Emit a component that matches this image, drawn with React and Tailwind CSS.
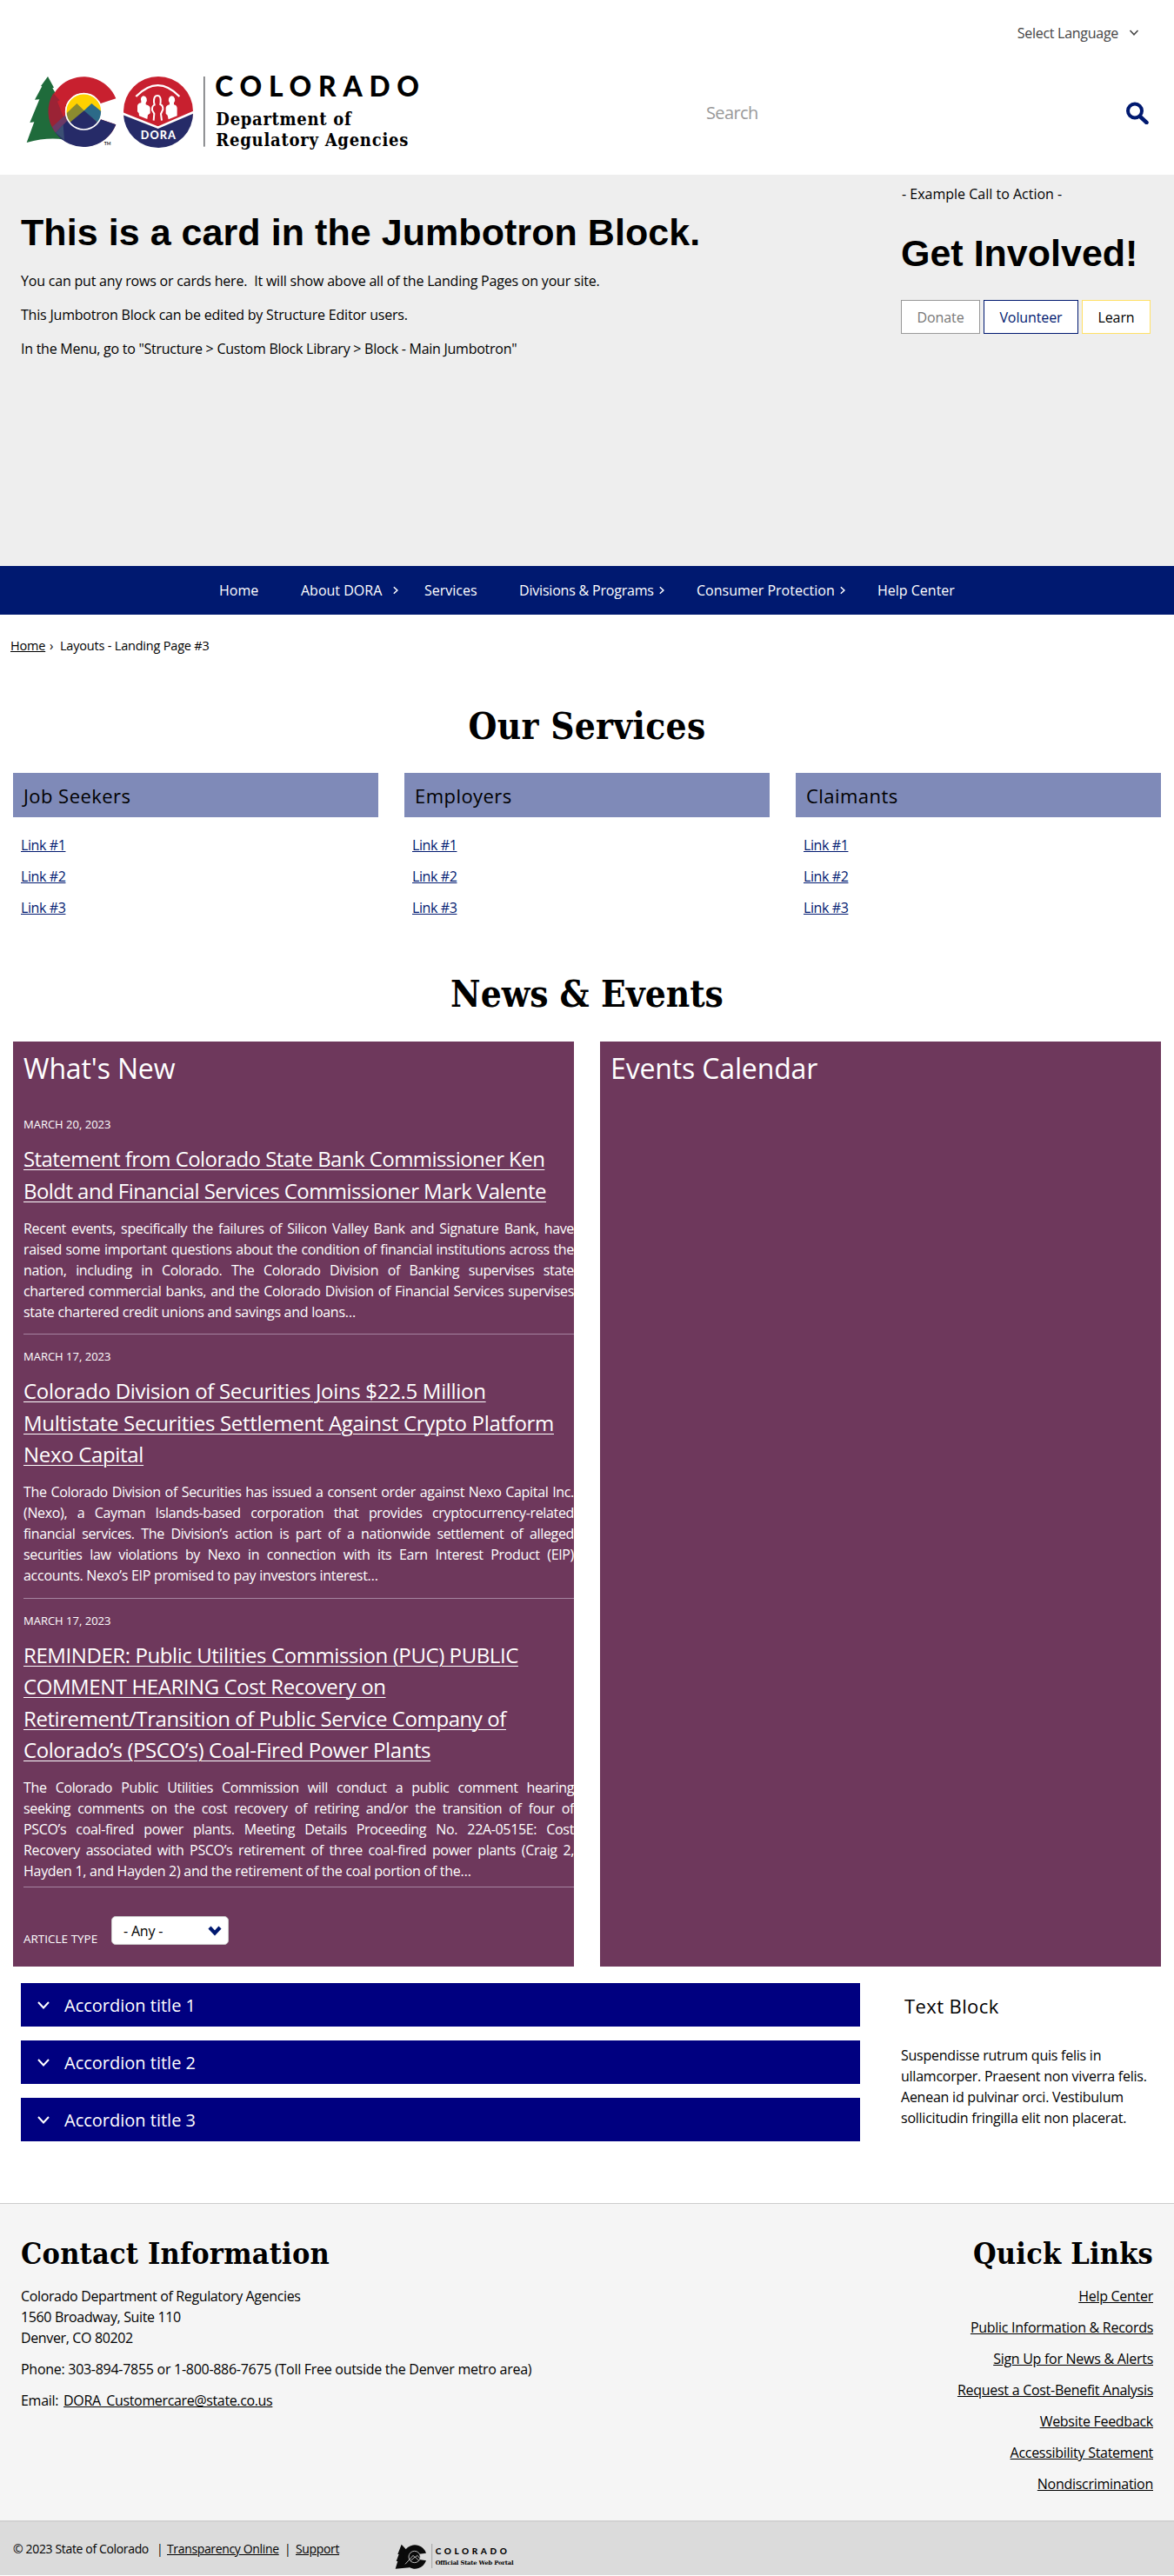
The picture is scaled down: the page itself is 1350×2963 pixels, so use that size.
import React from "react";

const SLAB = "font-['DejaVu_Serif_Condensed','DejaVu_Serif',serif] font-bold";

function Chevron({ className, dir = "down", stroke = 2 }) {
  const d = dir === "down" ? "M2 4 L8 10.5 L14 4" : "M4.5 2 L11 8 L4.5 14";
  return (
    <svg viewBox="0 0 16 16" className={className} fill="none" stroke="currentColor" strokeWidth={stroke}>
      <path d={d} />
    </svg>
  );
}

function StateEmblem() {
  return (
    <g>
      <path
        d="M165 84 L186 122 L181 124 L206 166 L198 170 L226 240 L222 302 Q165 292 92 312 L118 241 L103 243 L136 163 L120 164 L145 118 L141 117 Z"
        fill="#1f6b3b"
      />
      <path d="M400 160 A120 120 0 1 0 400 250 L345 231 A63 63 0 1 1 345 178 Z" fill="#c8202f" />
      <path d="M190 276 L240 226 A63 63 0 0 0 345 231 L400 250 A120 120 0 0 1 190 276 Z" fill="#262b68" />
      <path d="M184 142 L206 166 L198 170 L222 232 L190 276 A120 120 0 0 1 184 142 Z" fill="#9b2335" />
      <path d="M226 216 L232 236 L192 278 L180 258 Z" fill="#6c3a66" />
      <path d="M192 278 L218 250 L222 304 Z" fill="#3b4f74" />
      <circle cx="289" cy="205" r="62" fill="#ffd100" />
      <path d="M228 212 L265 177 L292 203 L240 243 Q228 228 228 212 Z" fill="#8b8b2f" />
      <path d="M350 205 L316 177 L288 203 L338 243 Q350 226 350 205 Z" fill="#2c6a88" />
      <path d="M240 243 L290 202 L338 243 A62 62 0 0 1 240 243 Z" fill="#262b68" />
      <circle cx="289" cy="205" r="62" fill="none" stroke="#fff" strokeWidth="5" />
    </g>
  );
}

function DoraLogo() {
  return (
    <svg viewBox="0 0 1500 420" width="500" height="140" className="block">
      <StateEmblem />
      <text x="359" y="321" fontFamily="Lato, sans-serif" fontWeight="700" fontSize="14" fill="#222" textLength="23" lengthAdjust="spacingAndGlyphs">TM</text>
      <circle cx="546" cy="204" r="120" fill="#c8202f" />
      <path d="M426 212 L545 262 L666 208 A120 120 0 0 1 426 212 Z" fill="#262b68" />
      <path d="M424 212 L545 260 L668 207" fill="none" stroke="#fff" strokeWidth="8" />
      <path d="M469 153 Q545 76 619 153" fill="none" stroke="#fff" strokeWidth="7" />
      <path d="M494 151 a12 14 0 0 1 9 24 v6 q14 3 15 12 v18 l-8 6 l-2 14 l-28 -11 l-1 -9 l-5 -6 v-20 q2 -9 13 -10 v-6 a12 14 0 0 1 7 -18 Z" fill="#fff" />
      <path d="M592 151 a12 14 0 0 1 8 24 v6 q10 2 11 12 v27 l-30 12 l-3 -14 l-6 -6 v-20 q2 -9 13 -11 v-6 a12 14 0 0 1 7 -24 Z" fill="#fff" />
      <path
        d="M530 236 L532 212 L525 200 Q524 185 533 182 L531 172 Q530 150 543 150 Q556 150 554 172 L553 180 Q563 184 562 198 L555 213 L558 236"
        fill="none"
        stroke="#fff"
        strokeWidth="6"
      />
      <text x="485" y="300" fontFamily="Lato, sans-serif" fontWeight="900" fontSize="38" fill="#fff" textLength="121">DORA</text>
      <rect x="702" y="84" width="5" height="242" fill="#77787b" />
      <text x="742" y="152" fontFamily="Lato, sans-serif" fontWeight="900" fontSize="95" fill="#000" textLength="704">COLORADO</text>
      <text x="745" y="253" fontFamily="DejaVu Serif Condensed, DejaVu Serif, serif" fontWeight="700" fontSize="60" fill="#000" textLength="466">Department of</text>
      <text x="745" y="325" fontFamily="DejaVu Serif Condensed, DejaVu Serif, serif" fontWeight="700" fontSize="60" fill="#000" textLength="663">Regulatory Agencies</text>
    </svg>
  );
}

function PortalLogo() {
  return (
    <svg viewBox="0 0 420 90" width="140" height="30" className="block">
      <path d="M23 2 L40 20 L52 60 L50 82 L2 86 L10 60 L5 60 L14 36 L10 36 Z" fill="#0a0a0a" />
      <path d="M108 32 A41 41 0 1 0 108 58 L84 54 A17 17 0 1 1 84 35 Z" fill="#0a0a0a" />
      <circle cx="68" cy="45" r="20" fill="#0a0a0a" stroke="#dbdbdb" strokeWidth="2.5" />
      <path d="M36 70 L58 46 L63 40 L70 47 L77 40 L87 50 M55 58 L70 45 L83 58" fill="none" stroke="#dbdbdb" strokeWidth="2.5" />
      <path d="M128 0 V84" stroke="#8a8a8a" strokeWidth="2" />
      <text x="140" y="35" fontFamily="Lato, sans-serif" fontWeight="900" fontSize="30" textLength="246">COLORADO</text>
      <text x="140" y="71" fontFamily="DejaVu Serif Condensed, DejaVu Serif, serif" fontWeight="700" fontSize="20" textLength="269" lengthAdjust="spacingAndGlyphs">Official State Web Portal</text>
    </svg>
  );
}

function Header() {
  return (
    <header className="h-[201px] bg-white pt-[26px]">
      <div className="flex h-6 items-center justify-end pr-[40px] text-[#444]">
        <span className="tracking-[-0.28px]">Select Language</span>
        <Chevron className="ml-[12px] size-3" />
      </div>
      <div className="mt-[10px] flex h-[140px] items-center">
        <DoraLogo />
        <span className="ml-[312px] flex-1 text-[20px] tracking-[-0.6px] text-[#999]">Search</span>
        <svg viewBox="0 0 26 26" className="mr-[29px] size-[26px]" fill="none" stroke="#001970">
          <circle cx="10" cy="10.5" r="8" strokeWidth="4" />
          <path d="M16 17 L23.5 24" strokeWidth="4.5" strokeLinecap="round" />
        </svg>
      </div>
    </header>
  );
}

function Jumbotron() {
  return (
    <section className="flex h-[450px] justify-between bg-[#eee] pl-6">
      <div className="pt-[42px] tracking-[-0.2px]">
        <h1 className="font-['Liberation_Sans',sans-serif] text-[43px] leading-[48px] font-bold tracking-[0.06px]">This is a card in the Jumbotron Block.</h1>
        <div className="mt-5 flex flex-col gap-[15px]">
          <p>You can put any rows or cards here.&nbsp; It will show above all of the Landing Pages on your site.</p>
          <p>This Jumbotron Block can be edited by Structure Editor users.</p>
          <p className="tracking-[-0.26px]">In the Menu, go to "Structure &gt; Custom Block Library &gt; Block - Main Jumbotron"</p>
        </div>
      </div>
      <div className="w-[314px] pt-[10px]">
        <p className="pl-px">- Example Call to Action -</p>
        <h2 className="mt-8 font-['Liberation_Sans',sans-serif] text-[43px] leading-[48px] font-bold">Get Involved!</h2>
        <div className="mt-[30px] flex h-[39px] gap-1 tracking-[-0.1px] [&>a]:flex [&>a]:items-center [&>a]:justify-center [&>a]:border [&>a]:bg-white">
          <a className="w-[91px] border-[#999] text-[#777]">Donate</a>
          <a className="w-[109px] border-[#001970] text-[#001970]">Volunteer</a>
          <a className="w-[79px] border-[#ffe066] text-black">Learn</a>
        </div>
      </div>
    </section>
  );
}

function Nav() {
  return (
    <nav className="flex h-14 items-center bg-[#001970] pl-[252px] text-white">
      <a className="w-[94px]">Home</a>
      <a className="flex w-[142px] items-center">About DORA<Chevron dir="right" stroke={2.4} className="ml-[11px] size-[10px]" /></a>
      <a className="w-[109px]">Services</a>
      <a className="flex w-[204px] items-center tracking-[-0.2px]">Divisions &amp; Programs<Chevron dir="right" stroke={2.4} className="ml-[4px] size-[10px]" /></a>
      <a className="flex w-[208px] items-center">Consumer Protection<Chevron dir="right" stroke={2.4} className="ml-[4px] size-[10px]" /></a>
      <a>Help Center</a>
    </nav>
  );
}

function Services() {
  return (
    <div className="mt-[29px] grid grid-cols-3 gap-[30px] px-[15px]">
      {["Job Seekers", "Employers", "Claimants"].map((title) => (
        <div key={title}>
          <h3 className="flex h-[51px] items-center bg-[#7f8ab8] pl-3 text-[22px] tracking-[0.45px]">{title}</h3>
          <ul className="mt-[14px] mb-px pl-[9px] leading-9 tracking-[-0.4px] text-[#001970] underline">
            <li>Link #1</li>
            <li>Link #2</li>
            <li>Link #3</li>
          </ul>
        </div>
      ))}
    </div>
  );
}

const NEWS = [
  {
    date: "MARCH 20, 2023",
    tracking: "tracking-[-0.56px]",
    title: ["Statement from Colorado State Bank Commissioner Ken", "Boldt and Financial Services Commissioner Mark Valente"],
    body: [
      "Recent events, specifically the failures of Silicon Valley Bank and Signature Bank, have",
      "raised some important questions about the condition of financial institutions across the",
      "nation, including in Colorado. The Colorado Division of Banking supervises state",
      "chartered commercial banks, and the Colorado Division of Financial Services supervises",
      "state chartered credit unions and savings and loans…",
    ],
  },
  {
    date: "MARCH 17, 2023",
    tracking: "tracking-[-0.32px]",
    title: ["Colorado Division of Securities Joins $22.5 Million", "Multistate Securities Settlement Against Crypto Platform", "Nexo Capital"],
    body: [
      "The Colorado Division of Securities has issued a consent order against Nexo Capital Inc.",
      "(Nexo), a Cayman Islands-based corporation that provides cryptocurrency-related",
      "financial services. The Division’s action is part of a nationwide settlement of alleged",
      "securities law violations by Nexo in connection with its Earn Interest Product (EIP)",
      "accounts. Nexo’s EIP promised to pay investors interest…",
    ],
  },
  {
    date: "MARCH 17, 2023",
    tracking: "tracking-[-0.42px]",
    title: [
      "REMINDER: Public Utilities Commission (PUC) PUBLIC",
      "COMMENT HEARING Cost Recovery on",
      "Retirement/Transition of Public Service Company of",
      "Colorado’s (PSCO’s) Coal-Fired Power Plants",
    ],
    body: [
      "The Colorado Public Utilities Commission will conduct a public comment hearing",
      "seeking comments on the cost recovery of retiring and/or the transition of four of",
      "PSCO’s coal-fired power plants. Meeting Details Proceeding No. 22A-0515E: Cost",
      "Recovery associated with PSCO’s retirement of three coal-fired power plants (Craig 2,",
      "Hayden 1, and Hayden 2) and the retirement of the coal portion of the…",
    ],
  },
];

function NewsItem({ item, last }) {
  return (
    <article className={last ? "border-b border-[#a583a0] pb-[6px]" : "mb-[13px] border-b border-[#a583a0] pb-[13.5px]"}>
      <p className="text-[13px]">{item.date}</p>
      <h4 className={`mt-[10px] text-[24px] leading-[36.5px] whitespace-nowrap underline decoration-1 underline-offset-[3px] ${item.tracking}`}>
        {item.title.map((t) => (
          <span key={t} className="block">{t}</span>
        ))}
      </h4>
      <p className="mt-[12.5px] tracking-[-0.34px]">
        {item.body.map((t, i) => (
          <span key={t} className={i < item.body.length - 1 ? "block [text-align-last:justify]" : "block tracking-[-0.28px]"}>{t}</span>
        ))}
      </p>
    </article>
  );
}

function News() {
  return (
    <div className="mt-[30px] grid grid-cols-2 gap-[30px] px-[15px] text-white">
      <section className="h-[1064px] bg-[#6e385c] pt-[7px] pl-3">
        <h3 className="text-[32px] leading-[48px] tracking-[-0.15px]">What's New</h3>
        <div className="mt-[28px]">
          {NEWS.map((item, i) => (
            <NewsItem key={i} item={item} last={i === NEWS.length - 1} />
          ))}
        </div>
        <div className="mt-[33px] flex items-end">
          <span className="w-[101px] translate-y-[4px] text-[13.5px] leading-[22px]">ARTICLE TYPE</span>
          <span className="flex h-[33px] w-[135px] items-center justify-between rounded-[5px] border border-[#ccc] bg-white pr-[7px] pl-[13px] tracking-[-0.2px] text-black">
            - Any -
            <Chevron stroke={4.2} className="size-[16px] text-[#001970]" />
          </span>
        </div>
      </section>
      <section className="bg-[#6e385c] pt-[7px] pl-3">
        <h3 className="text-[32px] leading-[48px] tracking-[-0.15px]">Events Calendar</h3>
      </section>
    </div>
  );
}

function Accordions() {
  return (
    <div className="mt-[19px] flex pl-6">
      <div className="flex w-[965px] flex-col gap-4">
        {[1, 2, 3].map((n) => (
          <div key={n} className="flex h-[50px] items-center bg-[#000080] pt-px pl-[18px] text-[20px] text-white">
            <Chevron className="mr-4 size-4" />
            Accordion title {n}
          </div>
        ))}
      </div>
      <div className="pl-[47px]">
        <h3 className="pt-[12px] pl-1 text-[22px] leading-[28px] tracking-[0.4px]">Text Block</h3>
        <p className="mt-[31px] tracking-[-0.24px] whitespace-nowrap">
          Suspendisse rutrum quis felis in<br />
          ullamcorper. Praesent non viverra felis.<br />
          Aenean id pulvinar orci. Vestibulum<br />
          sollicitudin fringilla elit non placerat.
        </p>
      </div>
    </div>
  );
}

const QUICK_LINKS = [
  "Help Center",
  "Public Information & Records",
  "Sign Up for News & Alerts",
  "Request a Cost-Benefit Analysis",
  "Website Feedback",
  "Accessibility Statement",
  "Nondiscrimination",
];

function Footer() {
  return (
    <footer className="mt-[71px]">
      <div className="flex h-[365px] justify-between border-t border-[#ccc] bg-[#f5f5f5] pt-[37px] pr-6 pl-6 tracking-[-0.28px]">
        <div>
          <h2 className={`${SLAB} text-[34px] leading-10 tracking-[0.2px]`}>Contact Information</h2>
          <p className="mt-[17px] tracking-[-0.36px]">
            Colorado Department of Regulatory Agencies<br />
            1560 Broadway, Suite 110<br />
            Denver, CO 80202
          </p>
          <p className="mt-3">Phone: 303-894-7855 or 1-800-886-7675 (Toll Free outside the Denver metro area)</p>
          <p className="mt-3">Email: <a className="ml-[2px] tracking-[-0.36px] underline">DORA_Customercare@state.co.us</a></p>
        </div>
        <div className="text-right">
          <h2 className={`${SLAB} text-[34px] leading-10 tracking-[0.2px]`}>Quick Links</h2>
          <ul className="mt-[11px] leading-9 underline">
            {QUICK_LINKS.map((l) => (
              <li key={l}>{l}</li>
            ))}
          </ul>
        </div>
      </div>
      <div className="flex h-[63px] items-center border-t-2 border-[#d2d2d2] bg-[#dbdbdb] pl-[15px] text-[14px] tracking-[-0.35px]">
        <span className="w-[165px]">© 2023 State of Colorado</span>
        <span className="w-3">|</span>
        <a className="w-[135px] underline">Transparency Online</a>
        <span className="w-[13px]">|</span>
        <a className="w-[114px] underline">Support</a>
        <span className="pt-[18px]"><PortalLogo /></span>
      </div>
    </footer>
  );
}

export default function App() {
  return (
    <div className="w-[1350px] overflow-hidden bg-white font-['Open_Sans',sans-serif] text-[16px] leading-6 text-black">
      <Header />
      <Jumbotron />
      <Nav />
      <main>
        <div className="flex pt-[24px] pl-3 text-[14.5px] tracking-[-0.2px]">
          <a className="w-[45px] underline">Home</a>
          <span className="w-[12px]">›</span>
          <span>Layouts - Landing Page #3</span>
        </div>
        <h2 className={`${SLAB} mt-[57px] text-center text-[42px] leading-[48px] tracking-[0.3px]`}>Our Services</h2>
        <Services />
        <h2 className={`${SLAB} mt-[57px] text-center text-[42px] leading-[48px]`}>News &amp; Events</h2>
        <News />
        <Accordions />
      </main>
      <Footer />
    </div>
  );
}
